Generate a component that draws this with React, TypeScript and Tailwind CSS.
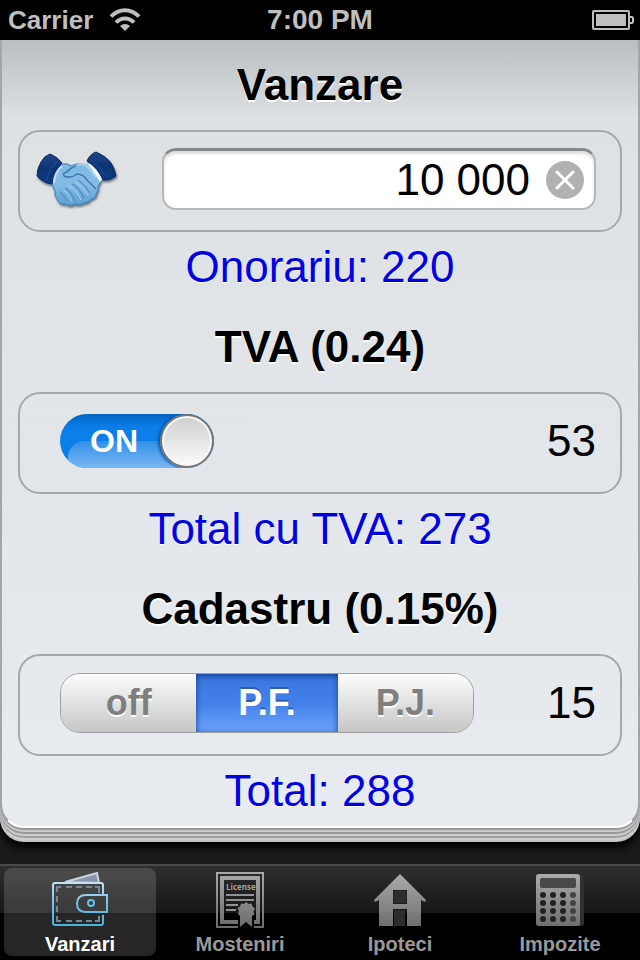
import { useState } from "react";
import type { ReactNode } from "react";

const TVA = 0.24;
const CADASTRU = 0.15;

const tabs = [
  { name: "Vanzari", icon: <WalletIcon /> },
  { name: "Mosteniri", icon: <LicenseIcon /> },
  { name: "Ipoteci", icon: <HouseIcon /> },
  { name: "Impozite", icon: <CalculatorIcon /> },
];

const persons = [
  { name: "off", width: "w-[136px]" },
  { name: "P.F.", width: "w-[142px]" },
  { name: "P.J.", width: "w-[136px]" },
];

function WifiIcon() {
  return (
    <svg width="32" height="24" viewBox="0 0 32 24" fill="none" stroke="#bfbfbf" strokeWidth="4">
      <path d="M2 8.500C10 0 22 0 30 8.500" />
      <path d="M7 14.500C12 9 20 9 25 14.500" />
      <path d="M11 18C14 15.200 18 15.200 21 18L16 23Z" fill="#bfbfbf" stroke="none" />
    </svg>
  );
}

function BatteryIcon() {
  return (
    <svg width="42" height="20" viewBox="0 0 42 20" fill="none" stroke="#bfbfbf" strokeWidth="2">
      <rect x="1" y="1" width="36" height="18" rx="1" />
      <rect x="4" y="4" width="30" height="12" fill="#bfbfbf" stroke="none" />
      <path d="M38 7h2l1 1v4l-1 1h-2" />
    </svg>
  );
}

function HandshakeIcon() {
  return (
    <svg width="84" height="60" viewBox="0 0 84 60">
      <defs>
        <linearGradient id="skin" x1="0" y1="0" x2="0" y2="1">
          <stop offset="0" stopColor="#7fb9e2" />
          <stop offset=".5" stopColor="#84bde4" />
          <stop offset="1" stopColor="#5a9fd2" />
        </linearGradient>
        <linearGradient id="cuff" x1="0" y1="0" x2="0" y2="1">
          <stop offset="0" stopColor="#1d4488" />
          <stop offset=".5" stopColor="#0d3575" />
          <stop offset="1" stopColor="#0b3a80" />
        </linearGradient>
        <filter id="soft" x="-10%" y="-10%" width="130%" height="130%">
          <feDropShadow dx="1" dy="2" stdDeviation="1" floodColor="#3c4658" floodOpacity=".7" />
        </filter>
      </defs>
      <g filter="url(#soft)">
        <path
          d="M25 14q5-3 10 1 7-4 16-1l5 5 9 11-3 5q1 4-2 8 0 4-5 5-2 4-7 4-4 3-9 1-5 3-10 0-6 1-8-5-3-3-2-8l-4-9z"
          fill="url(#skin)"
          stroke="#4380b4"
        />
        <path d="M52 13l5-1 10 15-3 4z" fill="#f2f9ff" />
        <path d="M51 10q3-7 9-9 11 5 15 11 4 6 5 13-6 5-13 4Q62 17 51 10z" fill="url(#cuff)" stroke="#0a2860" />
        <path d="M26 12Q20 5 14 3 8 5 5 11 1 18 1 25q6 7 15 8 1-12 10-21z" fill="url(#cuff)" stroke="#0a2860" />
      </g>
      <path d="M55 9q9 6 14 16M21 11q-8 7-10 18" fill="none" stroke="#2b5a9e" opacity=".6" />
      <path d="M26 15q-8 7-8 17" fill="none" stroke="#c3e2f6" strokeWidth="2" />
      <path d="M40 15q-6 2-9 6-5 1-3 4 7 3 13-2 6 0 10 6l9 9" fill="none" stroke="#3f7cae" strokeWidth="1.500" />
      <path d="M41 14q7-2 11 2l8 10" fill="none" stroke="#acd6f2" strokeWidth="2" />
      <path d="M42 29q6 4 12 13M36 33q7 3 12 14M29 37q6 3 10 13M24 41q4 3 7 9" fill="none" stroke="#5292c4" strokeWidth="1.500" />
      <path d="M40 31q6 4 12 13M33 35q7 3 12 14M27 39q6 3 9 12" fill="none" stroke="#a9d5f2" strokeWidth="1" />
    </svg>
  );
}

function WalletIcon() {
  return (
    <svg width="58" height="56" viewBox="0 0 58 56" fill="none" strokeWidth="2">
      <defs>
        <linearGradient id="wallet" x1="0" y1="10" x2="0" y2="55" gradientUnits="userSpaceOnUse">
          <stop offset="0" stopColor="#c5e3f4" />
          <stop offset=".5" stopColor="#6fc0ec" />
          <stop offset="1" stopColor="#48b2dc" />
        </linearGradient>
      </defs>
      <path d="M14 10L46 1l2 10z" fill="#8b93a8" stroke="#c8d3df" />
      <path d="M52 22v-9q0-2-2-2H4q-2 0-2 2v38q0 2 2 2h46q2 0 2-2v-8" stroke="url(#wallet)" />
      <path d="M6 20v-5h4M15 15h6M25 15h6M35 15h6M44 15h4v6M6 24v6M6 34v6M6 44v5h4M15 49h6M25 49h6M35 49h6M44 49h4v-5" stroke="#74879a" />
      <path d="M56 23H35q-9 0-9 8.500T35 40h21z" stroke="url(#wallet)" />
      <circle cx="40" cy="31" r="3" stroke="#62c0ee" />
    </svg>
  );
}

function LicenseIcon() {
  return (
    <svg width="48" height="56" viewBox="0 0 48 56">
      <defs>
        <linearGradient id="gray" x1="0" y1="0" x2="0" y2="56" gradientUnits="userSpaceOnUse">
          <stop offset="0" stopColor="#aaaaaa" />
          <stop offset="1" stopColor="#6b6b6b" />
        </linearGradient>
      </defs>
      <path d="M22 55H1V1h46v54H38" fill="none" stroke="url(#gray)" strokeWidth="2" />
      <path d="M22 50H6V6h36v44h-4" fill="none" stroke="url(#gray)" strokeWidth="4" />
      <text x="10" y="18" fontFamily="Open Sans, sans-serif" fontSize="8" fill="#a0a0a0">License</text>
      <path d="M10 23h28M10 28h28M10 33h12M10 38h10" stroke="#929292" strokeWidth="2" />
      <path
        d="M30 30l2.500 2 3-.5 1 3 2.500 2-1.500 3 1 3-2.500 1.500V55l-6-5-6 5V44L22 42l1-3-1.500-3 2.500-1.500 1-3 3 .5z"
        fill="url(#gray)"
      />
    </svg>
  );
}

function HouseIcon() {
  return (
    <svg width="52" height="52" viewBox="0 0 52 52">
      <path d="M26 0L52 26l-1 2-4-2v26H33V35H19v17H5V26l-4 2-1-2zM19 16v14h14V16z" fill="url(#gray)" fillRule="evenodd" />
      <path d="M20 17h12v12H20zM20 36h11v16H20z" fill="#2d2d2d" />
    </svg>
  );
}

function CalculatorIcon() {
  return (
    <svg width="48" height="52" viewBox="0 0 48 52">
      <rect x="6" y="1" width="42" height="51" rx="3" fill="#303030" />
      <rect width="44" height="52" rx="3" fill="url(#gray)" />
      <rect x="4" y="4" width="36" height="10" rx="2" fill="#484848" />
      {[21, 29, 37, 45].map((y) =>
        [7, 17, 27, 37].map((x) => (
          <circle key={`${x}-${y}`} cx={x} cy={y} r="3" fill={x === 37 ? "#444444" : "#222222"} />
        ))
      )}
    </svg>
  );
}

const Section = ({ title, result, children }: { title: string; result: string; children: ReactNode }) => (
  <section className="text-center text-[44px]">
    <h2 className="font-bold leading-[90px] [text-shadow:0_2px_0_#fff]">{title}</h2>
    <div className="mx-4 flex h-[102px] items-center justify-between rounded-[22px] border-2 border-[#a5a8ab]">
      {children}
    </div>
    <p className="leading-[70px] text-[#0000e6] [text-shadow:0_1px_0_#fff]">{result}</p>
  </section>
);

const App = () => {
  const [price, setPrice] = useState("10 000");
  const [withTva, setWithTva] = useState(true);
  const [person, setPerson] = useState("P.F.");
  const [tab, setTab] = useState("Vanzari");

  const amount = Number(price.replace(/\s/g, "")) || 0;
  const fee = Math.round(amount * 0.022);
  const tva = withTva ? Math.round(fee * TVA) : 0;
  const cadastru = person === "off" ? 0 : Math.round((amount * CADASTRU) / 100);

  return (
    <div className="flex min-h-screen flex-col bg-[#161616] font-['Liberation_Sans',Arial,sans-serif] text-black">
      <header className="grid h-10 grid-cols-3 items-center bg-black px-2 font-bold text-[#bfbfbf]">
        <div className="flex items-center gap-4 text-[26px] leading-9">
          Carrier
          <WifiIcon />
        </div>
        <div className="text-center text-[28px] leading-9">7:00 PM</div>
        <div className="-mr-0.5 flex justify-end">
          <BatteryIcon />
        </div>
      </header>

      <main className="flex-1 bg-linear-to-b from-[#222] to-[#1b1b1b] pb-9">
        <div className="rounded-b-[24px] border-x-2 border-b-2 border-x-[#a3a6a8] border-b-white bg-linear-to-b from-[#b9bec0] via-[#dde1e4] via-10% to-[#e8ebef] shadow-[0_2px_0_#999,0_4px_0_#c9c9c9,0_6px_0_#999,0_8px_0_#cecece,0_10px_0_#a0a0a0,0_12px_0_#d0d0d0,0_14px_0_#c4c4c4,0_20px_8px_#000]">
          <Section title="Vanzare" result={`Onorariu: ${fee}`}>
            <div className="pl-4">
              <HandshakeIcon />
            </div>
            <div className="mr-6 ml-[42px] -mt-1 flex h-[62px] min-w-0 flex-1 items-center gap-4 rounded-[14px] border-2 border-t-[3px] border-[#b5b7b9] border-t-[#858789] bg-white pr-2.5 shadow-[inset_0_3px_3px_#ddd]">
              <input
                aria-label="Vanzare"
                className="w-full min-w-0 bg-transparent text-right outline-none"
                value={price}
                onChange={(e) => setPrice(e.target.value)}
              />
              <button
                aria-label="Clear"
                className="flex size-[38px] shrink-0 items-center justify-center rounded-full bg-[#b1b1b1]"
                onClick={() => setPrice("")}
              >
                <svg width="20" height="20" viewBox="0 0 20 20" stroke="#fff" strokeWidth="3" strokeLinecap="round">
                  <path d="M2 2l16 16M18 2L2 18" />
                </svg>
              </button>
            </div>
          </Section>

          <Section title={`TVA (${TVA})`} result={`Total cu TVA: ${fee + tva}`}>
            <label className="relative ml-10 -mt-1 flex h-[54px] w-[154px] cursor-pointer items-center overflow-hidden rounded-full bg-linear-to-b from-[#0464c0] via-[#0a7fe8] via-25% to-[#0a7fe8]">
              <input
                type="checkbox"
                role="switch"
                aria-label="TVA"
                className="peer sr-only"
                checked={withTva}
                onChange={(e) => setWithTva(e.target.checked)}
              />
              <span className="absolute right-0 bottom-0 left-2 h-[27px] rounded-tl-2xl bg-linear-to-b from-[#2d8fe9] to-[#7ab8f2]" />
              <span className="relative w-[108px] text-center text-[32px] font-bold text-white">
                {withTva ? "ON" : "OFF"}
              </span>
              <span className="absolute right-0 size-[54px] rounded-full border-2 border-[#777] bg-linear-to-b from-[#cfcfcf] to-[#fcfcfc] shadow-[inset_0_0_0_2px_#f8f8f8,-2px_0_3px_#0458a6]" />
            </label>
            <span className="-mt-1 pr-6">{tva}</span>
          </Section>

          <Section title={`Cadastru (${CADASTRU}%)`} result={`Total: ${fee + tva + cadastru}`}>
            <div
              role="radiogroup"
              aria-label="Cadastru"
              className="ml-10 -mt-1 flex h-[60px] w-[414px] overflow-hidden rounded-[20px] border border-[#a0a0a0] text-[36px] leading-[58px] font-bold"
            >
              {persons.map(({ name, width }) => (
                <label key={name} className={`${width} cursor-pointer`}>
                  <input
                    type="radio"
                    name="person"
                    className="peer sr-only"
                    checked={person === name}
                    onChange={() => setPerson(name)}
                  />
                  <span className="block bg-linear-to-b from-[#fdfdfd] to-[#c6c6c6] text-[#7f7f7f] [text-shadow:0_2px_0_#fff] peer-checked:from-[#3a76de] peer-checked:via-[#4380e9] peer-checked:to-[#6ba3fb] peer-checked:text-white peer-checked:shadow-[inset_0_2px_6px_#123f94] peer-checked:[text-shadow:0_-2px_0_#2d5cb0]">
                    {name}
                  </span>
                </label>
              ))}
            </div>
            <span className="-mt-1 pr-6">{cadastru}</span>
          </Section>
        </div>
      </main>

      <nav className="grid h-24 grid-cols-4 border-t-2 border-[#4a4a4a] bg-linear-to-b from-[#2e2e2e] via-[#171717] via-50% to-black to-50% pt-0.5 pb-1">
        {tabs.map(({ name, icon }) => (
          <button
            key={name}
            aria-pressed={tab === name}
            className="mx-1 flex flex-col items-center justify-between rounded-lg pt-1 text-[20px] leading-6 font-bold text-[#999] aria-pressed:bg-white/15 aria-pressed:text-white"
            onClick={() => setTab(name)}
          >
            <span className="flex h-14 items-center">{icon}</span>
            {name}
          </button>
        ))}
      </nav>
    </div>
  );
};

export default App;
